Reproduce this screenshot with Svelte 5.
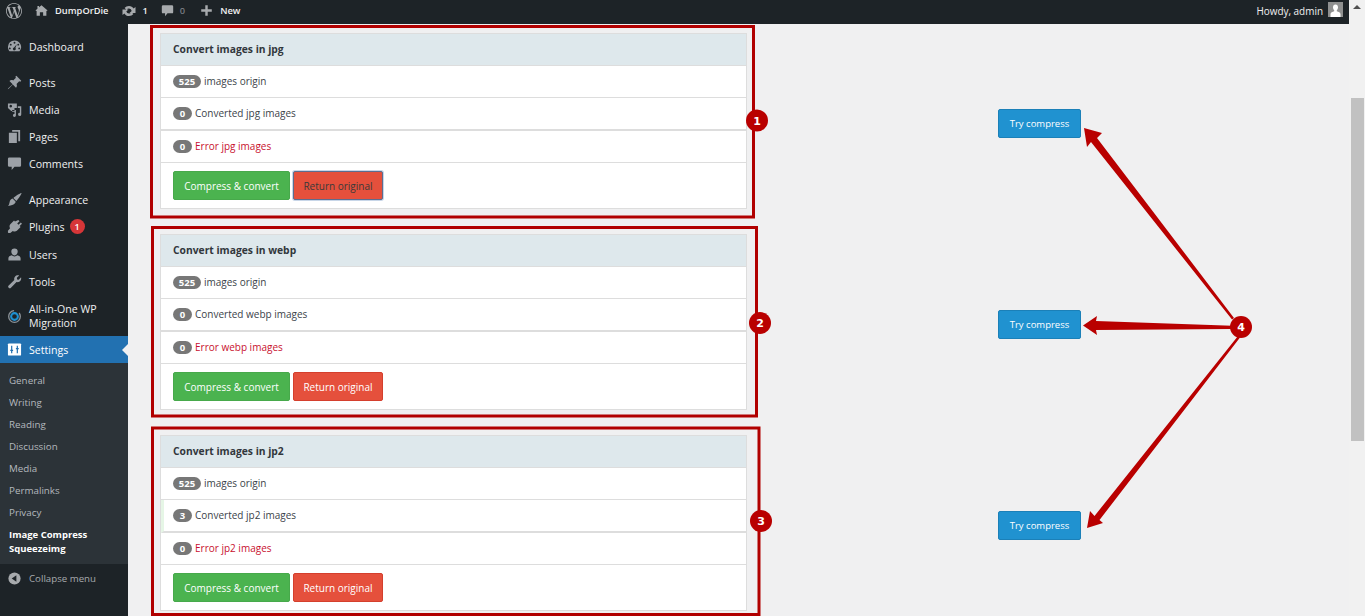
<script>
  const wp = "M21.469 6.825c.84 1.537 1.318 3.3 1.318 5.175 0 3.979-2.156 7.456-5.363 9.325l3.295-9.527c.615-1.54.82-2.771.82-3.864 0-.405-.026-.78-.07-1.11m-7.981.105c.647-.03 1.232-.105 1.232-.105.582-.075.514-.93-.067-.899 0 0-1.755.135-2.88.135-1.064 0-2.85-.15-2.85-.15-.585-.03-.661.855-.075.885 0 0 .54.061 1.125.09l1.68 4.605-2.37 7.08L5.354 6.9c.649-.03 1.234-.1 1.234-.1.585-.075.516-.93-.065-.896 0 0-1.746.138-2.874.138-.2 0-.438-.008-.69-.015C4.911 3.15 8.235 1.215 12 1.215c2.809 0 5.365 1.072 7.286 2.833-.046-.003-.091-.009-.141-.009-1.06 0-1.812.923-1.812 1.914 0 .89.513 1.643 1.06 2.531.411.72.89 1.643.89 2.977 0 .915-.354 1.994-.821 3.479l-1.075 3.585-3.9-11.61.001.014zM12 22.784c-1.059 0-2.081-.153-3.048-.437l3.237-9.406 3.315 9.087c.024.053.05.101.078.149-1.12.393-2.325.609-3.582.609M1.211 12c0-1.564.336-3.05.935-4.39L7.29 21.709C3.694 19.96 1.212 16.271 1.211 12M12 0C5.385 0 0 5.385 0 12s5.385 12 12 12 12-5.385 12-12S18.615 0 12 0";
  const icons = {
    dashboard: "M8 1.500a7 7 0 0 0-7 7c0 1.800.7 3.400 1.700 4.600h10.600A7 7 0 0 0 8 1.500zM8 3a1 1 0 1 1 0 2 1 1 0 0 1 0-2zM4 5a1 1 0 1 1 0 2 1 1 0 0 1 0-2zM12 5a1 1 0 1 1 0 2 1 1 0 0 1 0-2zM3 9a1 1 0 1 1 0 2 1 1 0 0 1 0-2zM13 9a1 1 0 1 1 0 2 1 1 0 0 1 0-2zM10.500 5.500l-1.600 4a1.500 1.500 0 1 1-1.400-.4z",
    posts: "M10 .8l5.200 5.200-1 1.200-1.200-.6-2.800 2.900c.7 1.500.4 3-.6 4L6.200 10 1.800 14.600.8 15.200l.6-1L6 9.800 2.600 6.400c1-1 2.500-1.300 4-.6l2.900-2.800-.6-1.200z",
    media: "M1 1.500h9.500v5H8v3H4.500L1 6.500zM4 3a1.400 1.400 0 1 0 .01 0zM9.500 8.500v5.800a1.600 1.600 0 1 1-1.500-1.600v-2.200H5.500v-2zM11.500 4.500h3.700v8.800a1.700 1.700 0 1 1-1.500-1.700V6.500h-2.200z",
    pages: "M5.500 1H14v12h-2V3H5.500zM2 4h8.500v11H2z",
    comments: "M2.500 1.500h11a1.500 1.500 0 0 1 1.500 1.500v7a1.500 1.500 0 0 1-1.500 1.500H8L5 15v-3.500H2.500A1.500 1.500 0 0 1 1 10V3a1.500 1.500 0 0 1 1.500-1.500z",
    appearance: "M15.500 1c.3.500-2.500 5.500-5.500 8.500L6.800 6.300C9.800 3.500 15 .7 15.500 1zM6 7l3.300 3.300c-.4 1.500-1.500 2.700-3 3.200-1.700.5-3.300 1.200-5.300 1.500 1.200-1.200 1.500-2.700 1.800-4.300C3.100 9 4.300 7.500 6 7z",
    plugins: "M12 1l1.300 1.300-2.400 2.400 1.400 1.400 2.400-2.400L16 5l-2.500 2.500 1 1-4 4c-1.400 1.200-3.100 1-4.300.2L3.500 15H1.500L1 14.500v-2l2.300-2.600C2.500 8.700 2.400 7 3.500 5.700l4-4 1 1z",
    users: "M8 1.500a3.400 3.400 0 0 1 3.400 3.600c0 2-1.400 3.900-3.400 3.900S4.600 7.100 4.600 5.100A3.400 3.400 0 0 1 8 1.500zM5 8.800c.8.800 1.800 1.200 3 1.200s2.200-.4 3-1.200c2 .4 3.500 1.500 3.500 3.200v2.500h-13V12c0-1.700 1.500-2.800 3.500-3.200z",
    tools: "M15 3.500c.5 2-.2 3.600-1.500 4.500-1.100.8-2.300.8-3.300.6l-6 6a1.700 1.700 0 0 1-3-.9c0-.6.2-1 .6-1.400l6-6c-.3-1.200-.2-2.500.7-3.500C9.600 1.500 11.300 1 13 1.500L10.500 4l.3 1.800 1.700.3z"
  };
  const top = [
    [["Dashboard", "dashboard"]],
    [["Posts", "posts"], ["Media", "media"], ["Pages", "pages"], ["Comments", "comments"]],
    [["Appearance", "appearance"], ["Plugins", "plugins", 1], ["Users", "users"], ["Tools", "tools"]]
  ];
  const sub = ["General", "Writing", "Reading", "Discussion", "Media", "Permalinks", "Privacy"];
  const panels = [
    { kind: "jpg", converted: 0 },
    { kind: "webp", converted: 0 },
    { kind: "jp2", converted: 3 }
  ];
</script>

<div class="page">
  <div class="left">
    <header class="bar">
      <svg class="wp" viewBox="0 0 24 24"><path d={wp} /></svg>
      <span class="bar-item home">
        <svg class="bi" viewBox="0 0 16 16"><path d="M8 1.500 15.500 8 14 8.500V14.500H10V10H6V14.500H2V8.500L.5 8 3 5.800V2.500H5V4.100z" /></svg>
        <b>DumpOrDie</b>
      </span>
      <span class="bar-item sync">
        <svg class="bi big" viewBox="0 0 16 16"><path d="M8 3c2 0 3.700 1 4.600 2.600L14.500 4v6h-6l2.200-2A3 3 0 0 0 8 5.500c-1 0-1.900.4-2.500 1.200L3.600 5C4.600 3.800 6.200 3 8 3zM1.500 6.500h6L5.300 8.500A3 3 0 0 0 8 10.500c1 0 1.900-.4 2.500-1.200l1.900 1.700C11.400 12.200 9.800 13 8 13c-2 0-3.700-1-4.600-2.600L1.500 12z" /></svg>
        <b>1</b>
      </span>
      <span class="bar-item comments">
        <svg class="bi" viewBox="0 0 16 16"><path d={icons.comments} /></svg>
        <b class="dim">0</b>
      </span>
      <span class="bar-item new">
        <svg class="bi" viewBox="0 0 16 16"><path d="M6.500 1.500h3v5h5v3h-5v5h-3v-5h-5v-3h5z" /></svg>
        <b>New</b>
      </span>
      <span class="howdy">Howdy, admin</span>
      <span class="avatar">
        <svg viewBox="0 0 15 15"><path d="M7.500 2.500c1.700 0 2.500 1.200 2.500 2.800 0 1.400-.6 2.500-1.200 3v1c1.700.5 3.700 1 3.700 3V15H2.500v-2.700c0-2 2-2.500 3.700-3v-1c-.6-.5-1.200-1.600-1.200-3 0-1.600.8-2.800 2.500-2.800z" /></svg>
      </span>
    </header>

    <div class="body">
      <nav class="side">
        {#each top as group}
          <ul class="group">
            {#each group as [label, ic, badge]}
              <li class="item" class:nudge={ic === "users"}>
                <svg class="mi" viewBox="0 0 16 16"><path d={icons[ic]} /></svg>
                <span>{label}</span>
                {#if badge}<i class="count">{badge}</i>{/if}
              </li>
            {/each}
          </ul>
        {/each}
        <div class="item tall">
          <svg class="mi aio" viewBox="0 0 16 16">
            <circle cx="8" cy="8" r="6.200" fill="none" stroke="#8b9298" stroke-width="1.400" stroke-dasharray="28 6" />
            <circle cx="8" cy="8" r="3.600" fill="none" stroke="#1e90d0" stroke-width="2.200" />
          </svg>
          <span>All-in-One WP<br />Migration</span>
        </div>
        <div class="item current">
          <svg class="mi" viewBox="0 0 16 16">
            <rect x="1" y="1.500" width="14" height="13" rx="1" fill="#fff" />
            <path class="cut" d="M3.500 9h3M5 4v8M9.500 7h3M11 4v8" />
          </svg>
          <span>Settings</span>
        </div>
        <ul class="sub">
          {#each sub as s}<li>{s}</li>{/each}
          <li class="active">Image Compress<br />Squeezeimg</li>
        </ul>
        <div class="collapse">
          <svg class="mi" viewBox="0 0 16 16"><circle cx="8" cy="8" r="6.500" /><path class="arrow" d="M10 4.500v7L5 8z" /></svg>
          <span>Collapse menu</span>
        </div>
      </nav>

      <main class="content">
        {#each panels as p}
          <section class="row">
            <div class="panel">
              <h3>Convert images in {p.kind}</h3>
              <div class="li"><em class="badge">525</em> <span class="label">images origin</span></div>
              <div class="li thick" class:ok={p.converted > 0}><em class="badge">{p.converted}</em> <span class="label">Converted {p.kind} images</span></div>
              <div class="li err"><em class="badge">0</em> <span class="label">Error {p.kind} images</span></div>
              <div class="foot">
                <button class="btn green">Compress &amp; convert</button>
                <button class="btn red" class:focus={p.kind === "jpg"}>Return original</button>
              </div>
            </div>
            <button class="btn blue">Try compress</button>
          </section>
        {/each}
      </main>
    </div>
  </div>

  <aside class="scroll">
    <i class="up"></i>
    <i class="thumb"></i>
  </aside>

  <svg class="marks" viewBox="0 0 1365 616">
    <g class="frames">
      <rect x="151.500" y="26.500" width="602" height="190.500" />
      <rect x="152.500" y="227.500" width="604" height="188.500" />
      <rect x="152.500" y="428" width="606.500" height="186.500" />
    </g>
    <g class="arrows">
      <polygon points="1084,128 1102,133 1097,138 1234,318 1232,319.500 1091,142 1087,147" />
      <polygon points="1083,325.500 1097,316 1096,321 1232,325.800 1232,329 1096,330 1097,335" />
      <polygon points="1087,528 1090,511 1094.500,516 1238,336 1240,337.500 1099.500,520 1103,523" />
    </g>
    <g class="dots">
      <circle cx="757" cy="120.500" r="11" /><text x="757" y="124.500">1</text>
      <circle cx="760" cy="323" r="11" /><text x="760" y="327">2</text>
      <circle cx="761" cy="521" r="11" /><text x="761" y="525">3</text>
      <circle cx="1241" cy="327" r="11" /><text x="1241" y="331">4</text>
    </g>
  </svg>
</div>

<style>
  :global(body) {
    margin: 0;
    overflow: hidden;
    background: #f0f0f1;
  }
  .page {
    position: relative;
    display: flex;
    height: 616px;
    overflow: hidden;
    font-family: "Open Sans", "Noto Sans", sans-serif;
    background: #f0f0f1;
  }
  .left {
    flex: 1;
    min-width: 0;
    display: flex;
    flex-direction: column;
  }
  .scroll {
    width: 16px;
    position: relative;
    display: flex;
    flex-direction: column;
    align-items: center;
    background: #f1f1f1;
  }
  .up {
    margin-top: 5px;
    border: 4px solid transparent;
    border-top: 0;
    border-bottom: 4px solid #505050;
  }
  .thumb {
    margin-top: 89px;
    width: 13px;
    height: 343px;
    background: #c1c1c1;
  }

  .bar {
    height: 24px;
    flex: none;
    display: flex;
    align-items: center;
    padding-left: 6px;
    background: #1d2327;
    color: #f0f0f1;
    font-size: 10px;
  }
  .bar b {
    font-weight: 600;
    font-size: 9.300px;
  }
  .bar b.dim {
    color: #787c82;
  }
  .bar svg {
    fill: #a7aaad;
    display: block;
  }
  .wp {
    width: 16px;
    height: 16px;
    margin-top: -2px;
  }
  .bar-item {
    display: flex;
    align-items: center;
    margin-top: -3px;
  }
  .bi {
    width: 13px;
    height: 13px;
  }
  .bi.big {
    width: 16px;
    height: 16px;
  }
  .home {
    margin-left: 13px;
    gap: 7px;
  }
  .sync {
    margin-left: 13px;
    gap: 5px;
  }
  .comments {
    margin-left: 13px;
    gap: 6px;
  }
  .new {
    margin-left: 15px;
    gap: 7px;
  }
  .howdy {
    margin-left: auto;
    margin-top: -3px;
    font-size: 9.950px;
    color: #f0f0f1;
  }
  .avatar {
    width: 15px;
    height: 15px;
    margin: -5px 6px 0 5px;
    background: #8f9090;
    overflow: hidden;
  }
  .bar .avatar svg {
    fill: #fff;
  }

  .body {
    flex: 1;
    display: flex;
    min-height: 0;
  }
  .side {
    width: 128px;
    flex: none;
    padding-top: 9px;
    background: #1d2327;
    color: #f0f0f1;
    font-size: 10.600px;
    box-sizing: border-box;
  }
  ul {
    list-style: none;
    margin: 0;
    padding: 0;
  }
  .group {
    margin-bottom: 9px;
  }
  .group:nth-child(3) {
    margin-bottom: 1px;
  }
  .item {
    height: 27px;
    display: flex;
    align-items: center;
    position: relative;
  }
  .item.nudge {
    margin-top: 1px;
  }
  .item.tall {
    height: 40px;
    line-height: 14px;
  }
  .mi {
    width: 15px;
    height: 15px;
    margin: 0 7px;
    flex: none;
    fill: #9ca1a7;
    fill-rule: evenodd;
  }
  .count {
    margin-left: 5px;
    width: 15px;
    height: 15px;
    border-radius: 50%;
    background: #d63638;
    color: #fff;
    font: 600 9px/15px "Open Sans", sans-serif;
    text-align: center;
  }
  .current {
    background: #2271b1;
    color: #fff;
  }
  .current::after {
    content: "";
    position: absolute;
    right: 0;
    top: 8px;
    border: 6px solid transparent;
    border-left: 0;
    border-right-color: #f0f0f1;
  }
  .cut {
    fill: none;
    stroke: #2271b1;
    stroke-width: 1.300;
  }
  .sub {
    background: #2c3338;
    padding: 7px 0 8px;
    color: #b4b9be;
    font-size: 9.800px;
  }
  .sub li {
    line-height: 22px;
    padding-left: 9px;
  }
  .sub li.active {
    color: #fff;
    font-size: 9.500px;
    font-weight: 700;
    line-height: 14px;
    padding-top: 4px;
  }
  .collapse {
    height: 28px;
    display: flex;
    align-items: center;
    color: #a7aaad;
    font-size: 9.700px;
  }
  .collapse .mi {
    fill: #a7aaad;
  }
  .arrow {
    fill: #1d2327;
  }

  .content {
    flex: 1;
    padding: 9px 0 0 32px;
    color: #333;
  }
  .row {
    display: grid;
    grid-template-columns: 587px auto;
    column-gap: 251px;
    justify-content: start;
    align-items: start;
    height: 201px;
  }
  .panel {
    box-sizing: border-box;
    height: 176px;
    border: 1px solid #ddd;
    background: #fff;
    font-size: 10px;
  }
  h3 {
    margin: 0;
    height: 31px;
    display: flex;
    align-items: center;
    padding: 0 0 1px 12px;
    box-sizing: content-box;
    height: 30px;
    background: #dee8ec;
    border-bottom: 1px solid #ddd;
    font-size: 10.300px;
    font-weight: 700;
    color: #32373c;
  }
  .li {
    box-sizing: border-box;
    height: 32px;
    padding-left: 12px;
    display: flex;
    align-items: center;
    gap: 3px;
    border-bottom: 1px solid #ddd;
    color: #3c434a;
  }
  .label {
    margin-top: -1px;
  }
  .li.thick {
    height: 33px;
    border-bottom-width: 2px;
  }
  .li.ok {
    padding-left: 9px;
    border-left: 3px solid #e6f6e6;
  }
  .err .label {
    color: #c8102e;
  }
  .badge {
    min-width: 7.400px;
    padding: 0 5.800px;
    height: 13px;
    border-radius: 7px;
    background: #777;
    color: #fff;
    font: 700 9.500px/13px "Open Sans", sans-serif;
    text-align: center;
  }
  .foot {
    display: flex;
    gap: 3px;
    padding: 8px 0 0 12px;
  }
  .btn {
    box-sizing: border-box;
    height: 29px;
    padding: 0;
    border: 1px solid transparent;
    border-radius: 2px;
    color: #fff;
    font-family: inherit;
    font-size: 10px;
  }
  .green {
    width: 117px;
    background: #4bb34f;
    border-color: #47a94b;
  }
  .red {
    width: 90px;
    background: #e5503c;
    border-color: #d43f2d;
  }
  .red.focus {
    color: #3a3a3a;
    border-color: #5d6d8f;
    box-shadow: 0 0 0 1px #c8d6e8;
  }
  .blue {
    width: 83px;
    margin-top: 76px;
    background: #2092d0;
    border-color: #1b80b8;
    font-size: 9.500px;
  }

  .marks {
    position: absolute;
    inset: 0;
    width: 1365px;
    height: 616px;
    pointer-events: none;
  }
  .frames rect {
    fill: none;
    stroke: #b10000;
    stroke-width: 3px;
  }
  .arrows polygon {
    fill: #b90000;
  }
  .dots circle {
    fill: #b90000;
  }
  .dots text {
    fill: #fff;
    font-family: "DejaVu Sans", sans-serif;
    font-size: 11px;
    font-weight: 700;
    text-anchor: middle;
  }
</style>
